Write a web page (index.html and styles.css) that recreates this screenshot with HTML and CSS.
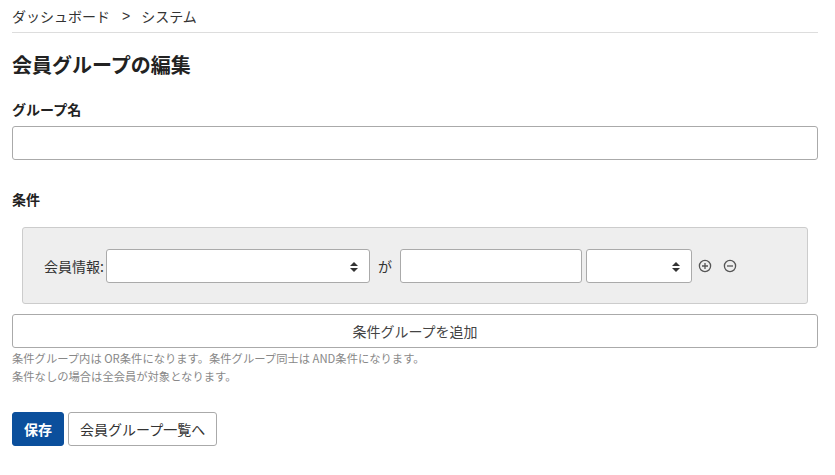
FILE: index.html
```html
<!DOCTYPE html>
<html lang="ja">
<head>
<meta charset="utf-8">
<link rel="stylesheet" href="styles.css">
</head>
<body>
<div class="page">
  <nav class="crumbs"><span>ダッシュボード</span><span class="sep">&gt;</span><span>システム</span></nav>
  <h1 class="title">会員グループの編集</h1>
  <label class="label">グループ名</label>
  <input class="input full" type="text">
  <div class="label cond-label">条件</div>
  <div class="cond-box">
    <div class="cond-row">
      <span class="row-label">会員情報:</span>
      <div class="select wide"><svg class="arrows" width="8" height="12" viewBox="0 0 8 12"><path d="M0 5 L4 1 L8 5Z M0 7 L4 11 L8 7Z" fill="#333"/></svg></div>
      <span class="ga">が</span>
      <input class="input value" type="text">
      <div class="select narrow"><svg class="arrows" width="8" height="12" viewBox="0 0 8 12"><path d="M0 5 L4 1 L8 5Z M0 7 L4 11 L8 7Z" fill="#333"/></svg></div>
      <svg class="icon" width="14" height="14" viewBox="0 0 14 14"><circle cx="7" cy="7" r="5.6" fill="none" stroke="#555" stroke-width="1.3"/><path d="M4 7H10M7 4V10" stroke="#555" stroke-width="1.3"/></svg>
      <svg class="icon" width="14" height="14" viewBox="0 0 14 14"><circle cx="7" cy="7" r="5.6" fill="none" stroke="#555" stroke-width="1.3"/><path d="M4 7H10" stroke="#555" stroke-width="1.3"/></svg>
    </div>
  </div>
  <button class="btn add">条件グループを追加</button>
  <p class="help">条件グループ内は OR条件になります。条件グループ同士は AND条件になります。<br>条件なしの場合は全会員が対象となります。</p>
  <div class="actions">
    <button class="btn primary">保存</button>
    <button class="btn">会員グループ一覧へ</button>
  </div>
</div>
</body>
</html>
```

FILE: styles.css
```css
* { box-sizing: border-box; }
body {
  margin: 0;
  background: #fff;
  color: #222;
  font-family: "Noto Sans CJK JP", "Noto Sans", sans-serif;
  font-size: 14px;
}
.page { padding: 0 17px 0 12px; }
.crumbs {
  padding: 6px 0 6px;
  line-height: 20px;
  border-bottom: 1px solid #ddd;
  color: #333;
  display: flex;
}
.crumbs .sep { margin: 0 11px 0 12px; font-family: "Liberation Sans", sans-serif; }
.title {
  margin: 18px 0 0;
  font-size: 20px;
  line-height: 28px;
  font-weight: bold;
  color: #222;
}
.label {
  display: block;
  margin-top: 20px;
  font-weight: bold;
  line-height: 20px;
  color: #222;
}
.input {
  display: block;
  height: 34px;
  border: 1px solid #aaa;
  border-radius: 3px;
  background: #fff;
  font: inherit;
  margin: 0;
  padding: 0 8px;
}
.full { width: 100%; margin-top: 7px; }
.cond-label { margin-top: 29px; }
.cond-box {
  margin: 18px 10px 0;
  background: #eee;
  border: 1px solid #ccc;
  border-radius: 3px;
  padding: 21px 20px 20px 21px;
}
.cond-row {
  display: flex;
  align-items: center;
  height: 34px;
}
.row-label { color: #333; line-height: 20px; width: 62px; }
.select {
  position: relative;
  height: 34px;
  background: #fff;
  border: 1px solid #aaa;
  border-radius: 3px;
}
.select .arrows { position: absolute; right: 11px; top: 11px; }
.wide { width: 264px; }
.narrow { width: 106px; }
.ga { margin: 0 8px; color: #333; }
.value { width: 182px; margin-right: 4px; }
.icon { margin-left: 6px; }
.icon + .icon { margin-left: 11px; }
.btn {
  font: inherit;
  height: 34px;
  border: 1px solid #aaa;
  border-radius: 3px;
  background: #fff;
  color: #333;
  padding: 0 11px;
  line-height: 20px;
  cursor: pointer;
}
.add { display: block; width: 100%; margin-top: 10px; color: #444; }
.help {
  margin: 1px 0 0;
  font-size: 11.3px;
  line-height: 18px;
  color: #888;
}
.actions { margin-top: 27px; display: flex; gap: 4px; }
.primary {
  background: #0b4f9c;
  border-color: #0b4f9c;
  color: #fff;
  font-weight: bold;
  padding: 0 11px;
}
```
